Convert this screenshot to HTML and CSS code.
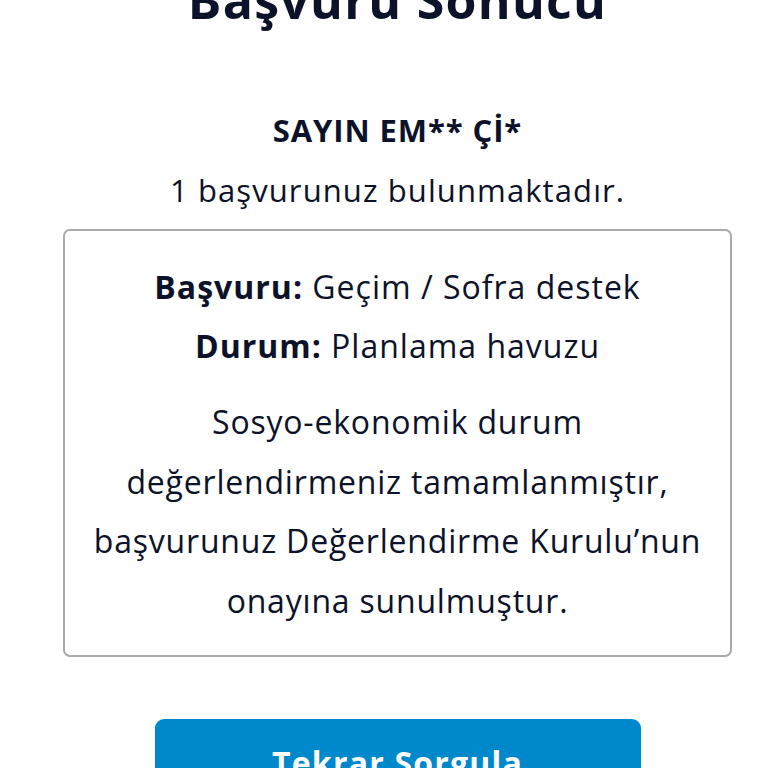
FILE: index.html
```html
<!DOCTYPE html>
<html lang="tr">
<head>
<meta charset="utf-8">
<title>Başvuru Sonucu</title>
<link rel="stylesheet" href="styles.css">
</head>
<body>
<main class="page">
  <h1 class="title">Başvuru Sonucu</h1>
  <p class="greeting">SAYIN EM** Çİ*</p>
  <p class="count">1 başvurunuz bulunmaktadır.</p>
  <section class="card">
    <p class="row"><strong>Başvuru:</strong> Geçim / Sofra destek</p>
    <p class="row"><strong>Durum:</strong> Planlama havuzu</p>
    <p class="desc">Sosyo-ekonomik durum<br>değerlendirmeniz tamamlanmıştır,<br>başvurunuz Değerlendirme Kurulu’nun<br>onayına sunulmuştur.</p>
  </section>
  <button class="btn" type="button">Tekrar Sorgula</button>
</main>
</body>
</html>
```
FILE: styles.css
```css
html, body {
  margin: 0;
  padding: 0;
  background: #ffffff;
}
body {
  font-family: "Open Sans", "DejaVu Sans", sans-serif;
  color: #0c1229;
  overflow: hidden;
}
.page {
  display: flex;
  flex-direction: column;
  align-items: center;
  padding: 0 36px 0 63px;
  text-align: center;
}
.title {
  margin: -30px 0 0;
  font-size: 50px;
  line-height: 60px;
  font-weight: 700;
  letter-spacing: 1.3px;
}
.greeting {
  margin: 80px 0 0;
  font-size: 31px;
  line-height: 40px;
  font-weight: 700;
  letter-spacing: 0.9px;
}
.count {
  margin: 20px 0 0;
  font-size: 31px;
  line-height: 40px;
  letter-spacing: 1.1px;
}
.card {
  align-self: stretch;
  margin-top: 19px;
  border: 2px solid #a9a9a9;
  border-radius: 7px;
  padding: 26px 10px 25px;
}
.row {
  margin: 0;
  font-size: 32px;
  line-height: 59px;
  letter-spacing: 1px;
}
.row strong {
  font-weight: 700;
}
.desc {
  margin: 17px 0 0;
  font-size: 32px;
  line-height: 59.5px;
  letter-spacing: 0.8px;
}
.btn {
  margin-top: 62px;
  width: 486px;
  height: 80px;
  border: none;
  border-radius: 9px;
  background: #0088cc;
  color: #ffffff;
  font-family: inherit;
  font-size: 32px;
  font-weight: 700;
  letter-spacing: 1.2px;
  padding: 6px 0 0;
}
```
